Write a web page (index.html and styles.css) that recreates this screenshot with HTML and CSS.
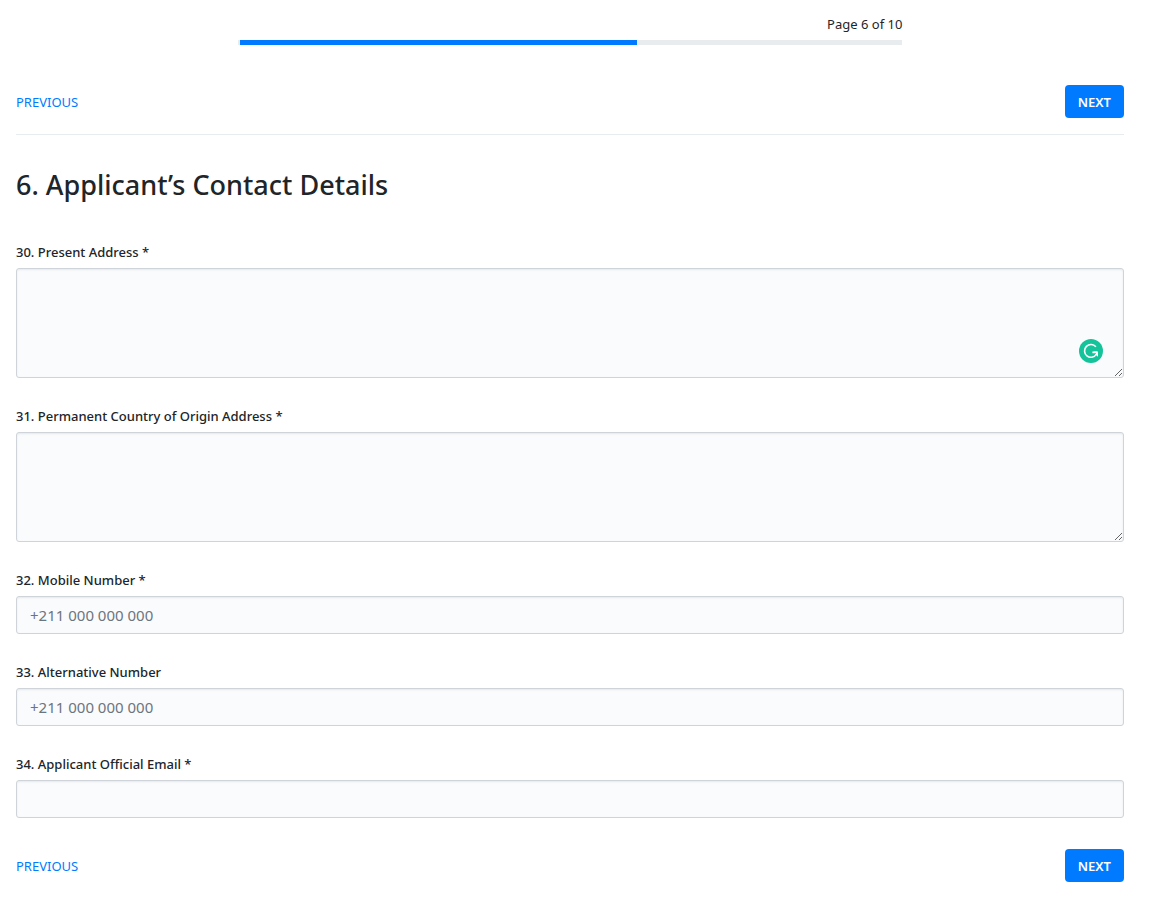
FILE: index.html
```
<!DOCTYPE html>
<html lang="en">
<head>
<meta charset="utf-8">
<meta name="viewport" content="width=device-width, initial-scale=1">
<title>Applicant’s Contact Details</title>
<link rel="stylesheet" href="styles.css">
</head>
<body>
<form class="page">
  <header class="progress">
    <p class="progress-label">Page 6 of 10</p>
    <div class="progress-track"><div class="progress-fill" style="width: 60%"></div></div>
  </header>
  <nav class="pager pager-top" aria-label="Form pages">
    <a class="previous" href="#previous">PREVIOUS</a>
    <button class="next" type="button">NEXT</button>
  </nav>
  <h1 class="title">6. Applicant’s Contact Details</h1>
  <div class="fields">
    <div class="field">
      <label for="present">30. Present Address *</label>
      <div class="area-wrap">
        <textarea class="control area" id="present"></textarea>
        <svg class="checker" viewBox="0 0 24 24" aria-hidden="true">
          <circle cx="12" cy="12" r="12" fill="#15c39a"/>
          <path d="M16.9 7.8A6.4 6.4 0 1 0 17.3 15.4M13.4 13.4H18" fill="none" stroke="#fff" stroke-width="1.6"/>
          <path d="M14.4 12.6H19V17.8L17.2 16.2L15.2 17.3L17.2 14.2Z" fill="#fff"/>
        </svg>
      </div>
    </div>
    <div class="field">
      <label for="permanent">31. Permanent Country of Origin Address *</label>
      <textarea class="control area" id="permanent"></textarea>
    </div>
    <div class="field">
      <label for="mobile">32. Mobile Number *</label>
      <input class="control" id="mobile" type="tel" placeholder="+211 000 000 000">
    </div>
    <div class="field">
      <label for="alternative">33. Alternative Number</label>
      <input class="control" id="alternative" type="tel" placeholder="+211 000 000 000">
    </div>
    <div class="field">
      <label for="email">34. Applicant Official Email *</label>
      <input class="control" id="email" type="email">
    </div>
  </div>
  <nav class="pager" aria-label="Form pages, bottom">
    <a class="previous" href="#previous">PREVIOUS</a>
    <button class="next" type="button">NEXT</button>
  </nav>
</form>
</body>
</html>
```
FILE: styles.css
```
* { box-sizing: border-box; }
body {
  margin: 0;
  background: #fff;
  color: #212529;
  font-family: "Segoe UI", "Noto Sans", "Open Sans", sans-serif;
  font-size: 13px;
  line-height: 20px;
}
.page { padding: 14px 25px 16px 16px; }
.progress { width: 60%; margin: 0 auto 40px; }
.progress-label { margin: 0 0 6px; text-align: right; }
.progress-track { height: 5px; padding-left: 2px; background: #e9ecef; }
.progress-fill { height: 100%; background: #007bff; }
.pager { display: flex; align-items: center; justify-content: space-between; }
.pager-top { padding-bottom: 16px; border-bottom: 1px solid #e9ecef; }
.previous { color: #007bff; text-decoration: none; }
.next {
  height: 33px;
  padding: 0 13px;
  border: 0;
  border-radius: 4px;
  background: #007bff;
  color: #fff;
  font: 600 13px "Segoe UI", "Noto Sans", "Open Sans", sans-serif;
}
.title { margin: 32px 0 39px; font-size: 27px; font-weight: 500; line-height: 36px; }
.fields { display: grid; gap: 28px; margin-bottom: 31px; }
.field { display: grid; gap: 6px; }
.field label { font-weight: 500; }
.control {
  display: block;
  width: 100%;
  height: 38px;
  margin: 0;
  padding: 6px 13px;
  border: 1px solid #ced4da;
  border-radius: 3px;
  background: #fafbfd;
  box-shadow: inset 0 1px 2px rgba(0, 0, 0, 0.08);
  color: #495057;
  font: 15px/24px "Segoe UI", "Noto Sans", "Open Sans", sans-serif;
}
.control::placeholder { color: #6c757d; opacity: 1; }
.area { height: 110px; resize: vertical; }
.area-wrap { position: relative; }
.checker { position: absolute; right: 21px; bottom: 15px; width: 24px; height: 24px; }
```
